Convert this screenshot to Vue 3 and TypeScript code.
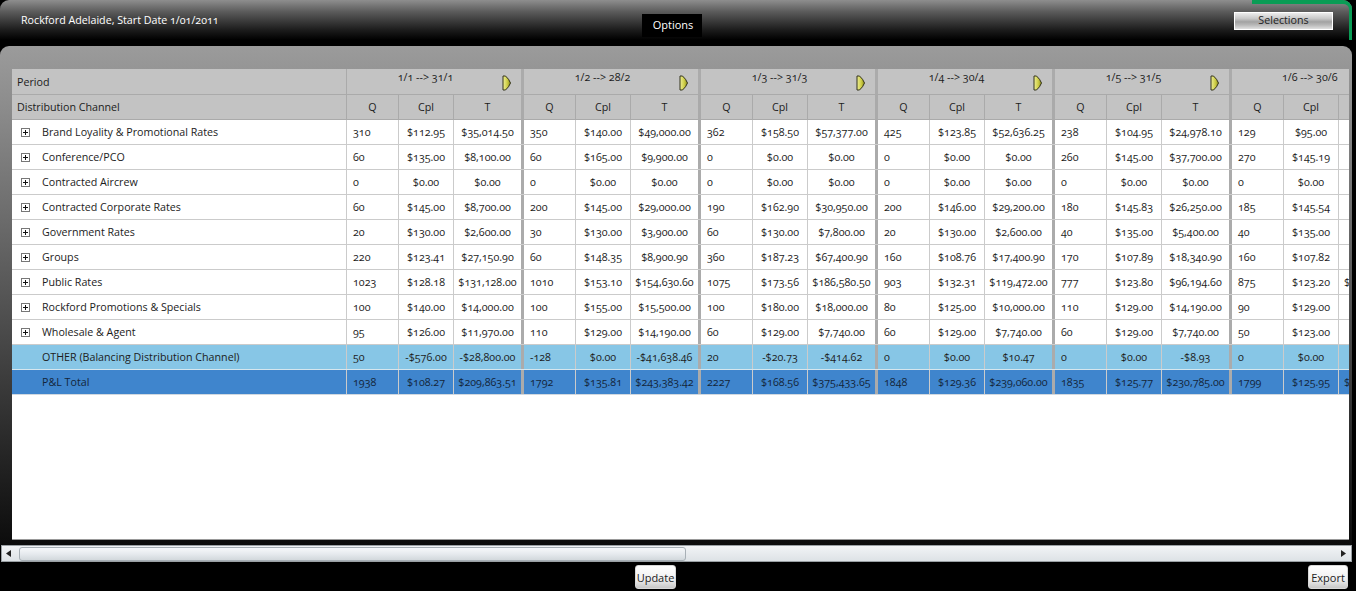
<script setup lang="ts">
const groups = ['1/1 --> 31/1', '1/2 --> 28/2', '1/3 --> 31/3', '1/4 --> 30/4', '1/5 --> 31/5', '1/6 --> 30/6']

type Row = { name: string; kind?: string; cells: string[] }

const rows: Row[] = [
  { name: 'Brand Loyality & Promotional Rates', cells: ['310', '$112.95', '$35,014.50', '350', '$140.00', '$49,000.00', '362', '$158.50', '$57,377.00', '425', '$123.85', '$52,636.25', '238', '$104.95', '$24,978.10', '129', '$95.00', ''] },
  { name: 'Conference/PCO', cells: ['60', '$135.00', '$8,100.00', '60', '$165.00', '$9,900.00', '0', '$0.00', '$0.00', '0', '$0.00', '$0.00', '260', '$145.00', '$37,700.00', '270', '$145.19', ''] },
  { name: 'Contracted Aircrew', cells: ['0', '$0.00', '$0.00', '0', '$0.00', '$0.00', '0', '$0.00', '$0.00', '0', '$0.00', '$0.00', '0', '$0.00', '$0.00', '0', '$0.00', ''] },
  { name: 'Contracted Corporate Rates', cells: ['60', '$145.00', '$8,700.00', '200', '$145.00', '$29,000.00', '190', '$162.90', '$30,950.00', '200', '$146.00', '$29,200.00', '180', '$145.83', '$26,250.00', '185', '$145.54', ''] },
  { name: 'Government Rates', cells: ['20', '$130.00', '$2,600.00', '30', '$130.00', '$3,900.00', '60', '$130.00', '$7,800.00', '20', '$130.00', '$2,600.00', '40', '$135.00', '$5,400.00', '40', '$135.00', ''] },
  { name: 'Groups', cells: ['220', '$123.41', '$27,150.90', '60', '$148.35', '$8,900.90', '360', '$187.23', '$67,400.90', '160', '$108.76', '$17,400.90', '170', '$107.89', '$18,340.90', '160', '$107.82', ''] },
  { name: 'Public Rates', cells: ['1023', '$128.18', '$131,128.00', '1010', '$153.10', '$154,630.60', '1075', '$173.56', '$186,580.50', '903', '$132.31', '$119,472.00', '777', '$123.80', '$96,194.60', '875', '$123.20', '$'] },
  { name: 'Rockford Promotions & Specials', cells: ['100', '$140.00', '$14,000.00', '100', '$155.00', '$15,500.00', '100', '$180.00', '$18,000.00', '80', '$125.00', '$10,000.00', '110', '$129.00', '$14,190.00', '90', '$129.00', ''] },
  { name: 'Wholesale & Agent', cells: ['95', '$126.00', '$11,970.00', '110', '$129.00', '$14,190.00', '60', '$129.00', '$7,740.00', '60', '$129.00', '$7,740.00', '60', '$129.00', '$7,740.00', '50', '$123.00', ''] },
  { name: 'OTHER (Balancing Distribution Channel)', kind: 'other', cells: ['50', '-$576.00', '-$28,800.00', '-128', '$0.00', '-$41,638.46', '20', '-$20.73', '-$414.62', '0', '$0.00', '$10.47', '0', '$0.00', '-$8.93', '0', '$0.00', ''] },
  { name: 'P&L Total', kind: 'total', cells: ['1938', '$108.27', '$209,863.51', '1792', '$135.81', '$243,383.42', '2227', '$168.56', '$375,433.65', '1848', '$129.36', '$239,060.00', '1835', '$125.77', '$230,785.00', '1799', '$125.95', '$'] },
]

const colClass = (i: number) => ['col-q', 'col-cpl', 'col-t'][i % 3]
</script>

<template>
  <div class="screen">
    <header class="top">
      <div class="title">Rockford Adelaide, Start Date 1/01/2011</div>
      <div class="options">Options</div>
      <button class="selections">Selections</button>
      <div class="accent"></div>
    </header>

    <section class="panel">
      <div class="grid">
        <div class="row head first">
          <div class="name">Period</div>
          <div v-for="g in groups" :key="g" class="group-head">
            <span>{{ g }}</span>
            <svg v-if="g !== groups[5]" class="arrow" width="10" height="16" viewBox="0 0 10 16">
              <defs>
                <linearGradient id="arrowFill" x1="0" y1="0" x2="1" y2="0">
                  <stop offset="0" stop-color="#eeee96" />
                  <stop offset="0.55" stop-color="#cfcf48" />
                  <stop offset="1" stop-color="#8e8e1c" />
                </linearGradient>
              </defs>
              <path d="M1 1 H3.5 Q7 4 8.5 8 Q7 12 3.5 15 H1 Z" fill="url(#arrowFill)" stroke="#33331a" stroke-width="1" />
            </svg>
          </div>
        </div>
        <div class="row head">
          <div class="name">Distribution Channel</div>
          <template v-for="g in groups" :key="g">
            <div class="cell col-q center">Q</div>
            <div class="cell col-cpl center">Cpl</div>
            <div class="cell col-t center">{{ g === groups[5] ? '' : 'T' }}</div>
          </template>
        </div>
        <div v-for="r in rows" :key="r.name" class="row" :class="r.kind">
          <div class="name body-name">
            <span class="expander">
              <svg v-if="!r.kind" width="9" height="9" viewBox="0 0 9 9">
                <rect x="0.5" y="0.5" width="8" height="8" fill="#fff" stroke="#777" />
                <path d="M2 4.5 H7 M4.5 2 V7" stroke="#111" />
              </svg>
            </span>
            {{ r.name }}
          </div>
          <div v-for="(c, i) in r.cells" :key="i" class="cell" :class="colClass(i)">{{ c }}</div>
        </div>
      </div>
    </section>

    <div class="scrollbar">
      <svg class="scroll-arrow" width="5" height="7" viewBox="0 0 5 7"><path d="M5 0 V7 L0 3.5 Z" fill="#222" /></svg>
      <div class="thumb"></div>
      <svg class="scroll-arrow right" width="5" height="7" viewBox="0 0 5 7"><path d="M0 0 V7 L5 3.5 Z" fill="#222" /></svg>
    </div>

    <footer class="bottom">
      <button class="action update">Update</button>
      <button class="action export">Export</button>
    </footer>
  </div>
</template>

<style>
html, body {
  margin: 0;
  background: #000;
}
</style>

<style scoped>
.screen {
  width: 1356px;
  height: 591px;
  background: #000;
  overflow: hidden;
  display: flex;
  flex-direction: column;
  font-family: "Open Sans", "Liberation Sans", sans-serif;
  font-size: 10.7px;
  font-variant-numeric: oldstyle-nums;
  color: #1c1c1c;
}

.top {
  position: relative;
  height: 46px;
  width: 1352px;
  box-sizing: border-box;
  border-radius: 9px 9px 0 0;
  background: linear-gradient(#8e8e8e 0, #5a5a5a 12px, #1c1c1c 30px, #000 40px);
  display: grid;
  grid-template-columns: 642px 60px 1fr;
  align-items: start;
}

.title {
  color: #fff;
  padding: 13px 0 0 21px;
  line-height: 14px;
}

.options {
  margin-top: 14px;
  height: 23px;
  line-height: 22px;
  padding-left: 2px;
  box-sizing: border-box;
  background: #000;
  color: #fff;
  text-align: center;
  font-size: 11px;
}

.selections {
  justify-self: end;
  margin: 12px 19px 0 0;
  width: 99px;
  height: 18px;
  padding: 0 0 2px;
  border: 1px solid #fff;
  background: linear-gradient(#ececec, #c8c8c8 35%, #a2a2a2 55%, #b8b8b8 75%, #e0e0e0);
  font: inherit;
  color: #222;
}

.accent {
  position: absolute;
  top: 0;
  right: 0;
  width: 100px;
  height: 40px;
  box-sizing: border-box;
  border-top: 4px solid #0a9c55;
  border-right: 3px solid #0a9c55;
  border-top-right-radius: 9px;
}

.panel {
  width: 1352px;
  height: 499px;
  box-sizing: border-box;
  padding: 23px 3px 5px 12px;
  border-radius: 9px 9px 0 0;
  background: linear-gradient(#9b9b9b 0, #8c8c8c 60px, #555 250px, #222 420px, #0c0c0c 499px);
}

.grid {
  height: 471px;
  background: #fff;
  overflow: hidden;
  border-bottom: 1px solid #999;
  box-sizing: border-box;
}

.row {
  display: flex;
  width: 1337px;
  height: 25px;
  box-sizing: border-box;
  border-bottom: 1px solid #cbcbcb;
  line-height: 24px;
  background: #fff;
}

.head {
  background: #c3c3c3;
  border-bottom-color: #aaa;
}

.head.first {
  height: 26px;
  line-height: 26px;
}

.other {
  background: #87c6e6;
  border-bottom-color: #d6e6ee;
}

.total {
  background: #3f85cd;
  border-bottom-color: #d0d8e0;
  color: #14253a;
}

.name {
  flex: none;
  width: 335px;
  box-sizing: border-box;
  padding-left: 5px;
  border-right: 1px solid #cbcbcb;
}

.head .name {
  border-right-color: #aaa;
}

.body-name {
  display: flex;
  align-items: center;
  padding-left: 9px;
}

.expander {
  flex: none;
  width: 21px;
  height: 9px;
  display: flex;
}

.group-head {
  flex: none;
  position: relative;
  width: 177px;
  box-sizing: border-box;
  border-right: 3px solid #ababab;
  text-align: center;
  line-height: 16px;
  padding-right: 17px;
}

.group-head:last-child {
  width: 117px;
  border-right: 0;
  padding: 0 0 0 50px;
  text-align: left;
  white-space: nowrap;
}

.arrow {
  position: absolute;
  right: 9px;
  top: 6px;
}

.cell {
  flex: none;
  box-sizing: border-box;
  text-align: center;
  white-space: nowrap;
  overflow: hidden;
  border-right: 1px solid #cbcbcb;
}

.head .cell {
  border-right-color: #aaa;
}

.col-q {
  width: 52px;
  text-align: left;
  padding-left: 6px;
}

.col-q.center,
.col-cpl.center,
.col-t.center {
  text-align: center;
  padding-left: 0;
}

.col-cpl {
  width: 55px;
}

.col-t {
  width: 70px;
  border-right: 3px solid #ababab;
}

.cell.col-t:last-child {
  width: 10px;
  padding-left: 5px;
  border-right: 0;
  text-align: left;
}

.scrollbar {
  width: 1351px;
  height: 17px;
  margin-left: 1px;
  box-sizing: border-box;
  border: 1px solid #9aa0a4;
  background: linear-gradient(#f2f4f6, #dde2e6);
  display: flex;
  align-items: center;
}

.scroll-arrow {
  flex: none;
  margin-left: 4px;
}

.scroll-arrow.right {
  margin-left: auto;
  margin-right: 5px;
}

.thumb {
  width: 667px;
  height: 14px;
  margin-left: 8px;
  box-sizing: border-box;
  border: 1px solid #a8b0b6;
  border-radius: 3px;
  background: linear-gradient(#f6f8fa, #e6eaee 50%, #d2d8dc);
}

.bottom {
  display: flex;
  height: 29px;
  padding-top: 3px;
  box-sizing: border-box;
}

.action {
  height: 24px;
  padding: 0;
  border: 1px solid #d8d8d8;
  border-radius: 3px;
  background: linear-gradient(#fff, #f0f0f0 60%, #c8c8c8);
  font: inherit;
  font-size: 11px;
  color: #222;
}

.update {
  width: 41px;
  margin-left: 635px;
}

.export {
  width: 40px;
  margin-left: 632px;
}
</style>
